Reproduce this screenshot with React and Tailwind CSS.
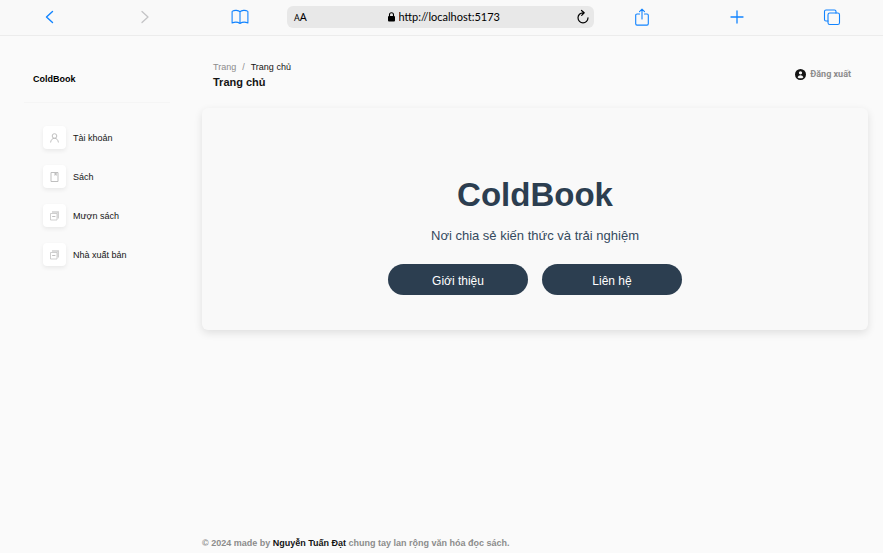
import React from "react";

const stroke = { fill: "none", stroke: "currentColor", strokeLinecap: "round", strokeLinejoin: "round" };

function ToolButton({ label, muted, children }) {
  return (
    <button type="button" aria-label={label} className={muted ? "text-[#c4c4c6]" : "text-[#1284ff]"}>
      {children}
    </button>
  );
}

function BrowserBar() {
  return (
    <header className="flex h-9 items-center border-b border-[#ececec] bg-[#f9f9f9] pb-px">
      <div className="grid flex-1 grid-cols-3 place-items-center pl-0.5">
        <ToolButton label="Back">
          <svg width="16" height="18" viewBox="0 0 16 18" {...stroke} strokeWidth="1.4"><path d="M10.5 3.500 4.500 9l6 5.500" /></svg>
        </ToolButton>
        <ToolButton label="Forward" muted>
          <svg width="16" height="18" viewBox="0 0 16 18" {...stroke} strokeWidth="1.3"><path d="m5 3.500 6 5.500-6 5.500" /></svg>
        </ToolButton>
        <ToolButton label="Bookmarks">
          <svg width="18" height="18" viewBox="0 0 18 18" {...stroke} strokeWidth="1.1">
            <path d="M9 3.700C7.500 2.200 3.500 1.900 1.500 3.100c-.3.2-.4.4-.4.7v11.200c2.200-1 5.700-1 7.900.5 2.200-1.500 5.700-1.500 7.900-.5V3.800c0-.3-.1-.5-.4-.7C14.500 1.900 10.500 2.200 9 3.700v11.800" />
          </svg>
        </ToolButton>
      </div>
      <div className="flex h-[22px] w-[307px] items-center rounded-md bg-[#e8e8e8] pl-[7px] pr-1 text-black">
        <button type="button" aria-label="Page settings" className="flex w-6 items-baseline font-['Noto_Sans',sans-serif] leading-4">
          <span className="text-[9px]">A</span><span className="text-[11px]">A</span>
        </button>
        <div className="flex flex-1 items-center justify-center gap-1">
          <svg width="7" height="10" viewBox="0 0 7 10"><path d="M1.500 4V2.700a2 2 0 0 1 4 0V4" fill="none" stroke="currentColor" strokeWidth="1.100" /><rect y="4" width="7" height="5.500" rx="1" fill="currentColor" /></svg>
          <input aria-label="Address" defaultValue="http://localhost:5173" className="w-[108px] bg-transparent font-[Lato,sans-serif] text-[11px] leading-4 outline-none" />
        </div>
        <button type="button" aria-label="Reload">
          <svg width="14" height="16" viewBox="0 0 14 16" {...stroke} strokeWidth="1.200"><path d="M7.500 3.800H7a5 5 0 1 0 5 5M5.500 1.500l2.700 2.300-2.500 2.500" /></svg>
        </button>
      </div>
      <div className="grid flex-1 grid-cols-3 place-items-center pr-1">
        <ToolButton label="Share">
          <svg width="16" height="20" viewBox="0 0 16 20" {...stroke} strokeWidth="1.100"><path d="M5.500 7H3a1.300 1.300 0 0 0-1.300 1.300v8.500A1.300 1.300 0 0 0 3 18.100h10a1.300 1.300 0 0 0 1.300-1.300V8.300A1.300 1.300 0 0 0 13 7h-2.500M8 12V2.300M5.500 4.600 8 2.200l2.500 2.400" /></svg>
        </ToolButton>
        <ToolButton label="New tab">
          <svg width="14" height="14" viewBox="0 0 14 14" {...stroke} strokeWidth="1.300"><path d="M7 1v12M1 7h12" /></svg>
        </ToolButton>
        <ToolButton label="Tabs">
          <svg width="18" height="18" viewBox="0 0 18 18" {...stroke} strokeWidth="1.100"><rect x="5" y="5" width="11.500" height="11.500" rx="1.800" /><path d="M5 13H3a1.500 1.500 0 0 1-1.500-1.500V3.500A1.500 1.500 0 0 1 3 2h8.500A1.500 1.500 0 0 1 13 3.500V5" /></svg>
        </ToolButton>
      </div>
    </header>
  );
}

function UserIcon() {
  return (
    <svg width="9" height="10" viewBox="0 0 9 10" fill="none" stroke="currentColor">
      <circle cx="4.500" cy="3" r="2.300" /><path d="M.6 9.500C.9 7 2.200 5.300 4.500 5.300S8.100 7 8.400 9.500" />
    </svg>
  );
}

function BookIcon() {
  return (
    <svg width="9" height="10" viewBox="0 0 9 10" fill="none" stroke="currentColor">
      <path d="M1 .5h7v9H1z" /><path d="M4.500.5h2.200v3.500l-1.100-.9-1.100.9z" fill="currentColor" stroke="none" />
    </svg>
  );
}

function StackIcon() {
  return (
    <svg width="9" height="10" viewBox="0 0 9 10" fill="none" stroke="currentColor">
      <path d="M.5 2.500h6.500v6.500H.5z" opacity=".75" /><path d="M2 1h6.200v6.500" strokeWidth="1.500" opacity=".75" /><path d="M2.200 5.500h3.200" />
    </svg>
  );
}

const links = [
  { label: "Tài khoản", Icon: UserIcon },
  { label: "Sách", Icon: BookIcon },
  { label: "Mượn sách", Icon: StackIcon },
  { label: "Nhà xuất bản", Icon: StackIcon },
];

function Sidebar() {
  return (
    <aside className="w-[202px] shrink-0 pl-6 pr-8 pt-9">
      <p className="border-b border-[#f5f5f5] pb-4 pl-[9px] font-bold text-black">ColdBook</p>
      <nav aria-label="Main" className="flex flex-col gap-4 pl-[19px] pt-[23px]">
        {links.map(({ label, Icon }) => (
          <a key={label} href="#" className="flex items-center gap-[7px] text-[#141414]">
            <span className="flex size-[23px] items-center justify-center rounded-[4px] bg-white text-[#bfbfbf] shadow-[0_2px_4px_rgba(0,0,0,0.07)]">
              <Icon />
            </span>
            {label}
          </a>
        ))}
      </nav>
    </aside>
  );
}

export default function App() {
  return (
    <div className="flex min-h-screen flex-col bg-[#fafafa] font-['Liberation_Sans',Arial,sans-serif] text-[9px] leading-[14px] text-[#141414]">
      <BrowserBar />
      <div className="flex flex-1">
        <Sidebar />
        <div className="flex min-w-0 flex-1 flex-col pr-[15px]">
          <div className="flex items-start justify-between pl-[11px] pr-[17px] pt-6">
            <div>
              <nav aria-label="Breadcrumb" className="flex gap-1.5">
                <a href="#" className="text-[#8c8c8c]">Trang</a>
                <span className="text-[#8c8c8c]">/</span>
                <span>Trang chủ</span>
              </nav>
              <h2 className="text-[11px] font-bold leading-4">Trang chủ</h2>
            </div>
            <button type="button" className="mt-[7px] flex items-center gap-1 font-[Roboto,sans-serif] font-bold text-[#8c8c8c]">
              <svg width="11" height="11" viewBox="0 0 20 20" className="text-[#141414]" fill="currentColor">
                <path fillRule="evenodd" d="M20 10a10 10 0 1 1-20 0 10 10 0 0 1 20 0zM13 7a3 3 0 1 1-6 0 3 3 0 0 1 6 0zM10 11.500a6 6 0 0 0-5.400 3.300A7 7 0 0 0 10 17a7 7 0 0 0 5.400-2.200A6 6 0 0 0 10 11.500z" clipRule="evenodd" />
              </svg>
              Đăng xuất
            </button>
          </div>
          <main className="mt-[18px] flex flex-col items-center rounded-md bg-[#f9f9f9] pb-[35px] pt-[67px] text-center text-[#2c3e50] shadow-[0_3px_8px_rgba(0,0,0,0.11)]">
            <h1 className="text-[33px] font-bold leading-10">ColdBook</h1>
            <p className="mt-[11px] text-[13px] leading-5 text-[#34495e]">Nơi chia sẻ kiến thức và trải nghiệm</p>
            <div className="mt-[18px] flex gap-3.5 text-xs text-white">
              <button type="button" className="h-[31px] w-[140px] rounded-full bg-[#2c3e50] pt-0.5">Giới thiệu</button>
              <button type="button" className="h-[31px] w-[140px] rounded-full bg-[#2c3e50] pt-0.5">Liên hệ</button>
            </div>
          </main>
          <footer className="mt-auto pb-[3px] font-bold text-[#8c8c8c]">
            © 2024 made by <a href="#" className="text-[#141414]">Nguyễn Tuấn Đạt</a> chung tay lan rộng văn hóa đọc sách.
          </footer>
        </div>
      </div>
    </div>
  );
}
